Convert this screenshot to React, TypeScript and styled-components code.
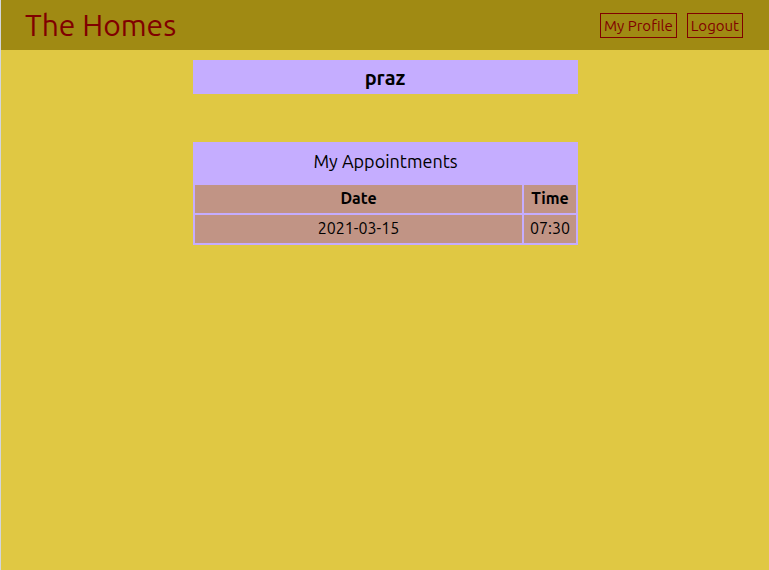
import React from "react";
import styled, { createGlobalStyle } from "styled-components";

const GlobalStyle = createGlobalStyle`
  html, body {
    margin: 0;
    padding: 0;
    background: #e0c843;
  }
  body {
    font-family: "Ubuntu", Lato, "Noto Sans", sans-serif;
  }
`;

const Page = styled.div`
  min-height: 100vh;
  box-sizing: border-box;
  border-left: 1px solid #d3d6dc;
  background: #e0c843;
`;

const Header = styled.header`
  display: flex;
  align-items: center;
  justify-content: space-between;
  height: 50px;
  padding: 0 26px 0 24px;
  background: #a08a13;
`;

const Title = styled.h1`
  margin: 0;
  font-size: 30px;
  font-weight: 400;
  color: #800000;
`;

const Nav = styled.nav`
  display: flex;
  gap: 10px;
  margin-top: 1px;
`;

const NavButton = styled.a`
  display: flex;
  align-items: center;
  box-sizing: border-box;
  height: 25px;
  padding: 0 3px;
  border: 1px solid #800000;
  color: #800000;
  font-size: 15px;
  cursor: pointer;
`;

const Main = styled.main`
  display: flex;
  flex-direction: column;
  align-items: center;
  padding-top: 10px;
  gap: 48px;
`;

const ProfileBox = styled.div`
  width: 385px;
  height: 34px;
  display: flex;
  align-items: center;
  justify-content: center;
  background: #c5adff;
  font-size: 20px;
  font-weight: 700;
  color: #000;
`;

const Table = styled.table`
  width: 385px;
  table-layout: fixed;
  border-collapse: separate;
  border-spacing: 2px;
  background: #c5adff;
  margin-left: 1px;
`;

const Caption = styled.caption`
  height: 41px;
  line-height: 38px;
  background: #c5adff;
  font-size: 18px;
  color: #000;
`;

const HeadCell = styled.th<{ $w?: number }>`
  ${(p) => (p.$w ? `width: ${p.$w}px;` : "")}
  height: 28px;
  padding: 0 0 2px;
  box-sizing: border-box;
  background: #c19485;
  font-size: 16px;
  font-weight: 700;
  text-align: center;
  color: #000;
`;

const Cell = styled.td`
  height: 28px;
  padding: 0 0 2px;
  box-sizing: border-box;
  background: #c19485;
  font-size: 16px;
  text-align: center;
  color: #000;
`;

const appointments = [{ date: "2021-03-15", time: "07:30" }];

export default function App() {
  return (
    <>
      <GlobalStyle />
      <Page>
        <Header>
          <Title>The Homes</Title>
          <Nav>
            <NavButton>My Profile</NavButton>
            <NavButton>Logout</NavButton>
          </Nav>
        </Header>
        <Main>
          <ProfileBox>praz</ProfileBox>
          <Table>
            <Caption>My Appointments</Caption>
            <thead>
              <tr>
                <HeadCell>Date</HeadCell>
                <HeadCell $w={52}>Time</HeadCell>
              </tr>
            </thead>
            <tbody>
              {appointments.map((a) => (
                <tr key={a.date + a.time}>
                  <Cell>{a.date}</Cell>
                  <Cell>{a.time}</Cell>
                </tr>
              ))}
            </tbody>
          </Table>
        </Main>
      </Page>
    </>
  );
}
